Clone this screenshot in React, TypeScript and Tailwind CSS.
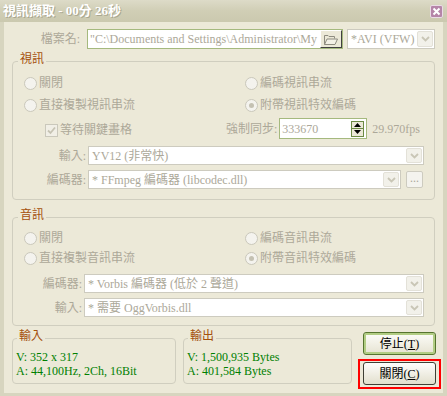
import React from "react";

const FONT = "font-['Liberation_Serif','Noto_Sans_CJK_TC',serif]";

const Radio = ({ checked }: { checked?: boolean }) => (
  <span className="flex h-[13px] w-[13px] shrink-0 items-center justify-center rounded-full border border-[#cac8bb] bg-[#f4f3ee]">
    {checked && <span className="h-[5px] w-[5px] rounded-full bg-[#c4c1b2]" />}
  </span>
);

const RadioItem = ({ label, checked }: { label: string; checked?: boolean }) => (
  <div className="flex items-center gap-[2px]">
    <Radio checked={checked} />
    <span>{label}</span>
  </div>
);

const Chevron = () => (
  <svg width="9" height="6" viewBox="0 0 9 6">
    <path d="M1 1 L4.5 4.5 L8 1" fill="none" stroke="#c9c6b6" strokeWidth="1.8" />
  </svg>
);

const Combo = ({ text, className }: { text: string; className: string }) => (
  <div className={`flex items-stretch border border-[#cdcbbf] bg-white ${className}`}>
    <span className="flex flex-1 items-center overflow-hidden whitespace-nowrap pl-[3px]">{text}</span>
    <span className="m-[1px] flex w-[16px] items-center justify-center rounded-[2px] border border-[#e3e1d8] bg-[#f2f1ea]">
      <Chevron />
    </span>
  </div>
);

const FolderIcon = () => (
  <svg width="16" height="13" viewBox="0 0 16 13">
    <path d="M1.5 11.5 V2.5 H5 L6 3.5 H11.5 V5.5" fill="none" stroke="#8e8c80" strokeWidth="1" />
    <path d="M1.5 11.5 L4 6 H14.5 L12 11.5 Z" fill="#f3f1e6" stroke="#8e8c80" strokeWidth="1" />
  </svg>
);

const Group = ({
  title,
  className,
  legendClass,
  children,
}: {
  title: string;
  className: string;
  legendClass: string;
  children: React.ReactNode;
}) => (
  <fieldset className={`rounded-[4px] border border-[#d0cebf] ${className}`}>
    <legend className={`px-[2px] pb-[4px] text-[#a5500c] ${legendClass}`}>{title}</legend>
    {children}
  </fieldset>
);

export default function App() {
  return (
    <div className={`${FONT} flex h-[396px] w-[447px] flex-col bg-[#d7d5bf] text-[12px] leading-[14px] text-[#aca899]`}>
      {/* title bar */}
      <div className="flex h-[22px] shrink-0 items-center justify-between bg-gradient-to-b from-[#dddbc8] via-[#d0ceb5] to-[#cbc9af] pl-[3px] pr-[4px]">
        <span className="text-[13px] font-bold text-white [text-shadow:1px_1px_0_#a9a790]">視訊擷取 - 00分 26秒</span>
        <span className="flex h-[13px] w-[13px] items-center justify-center rounded-[2px] border border-[#eadbe6] bg-[#b585a8]">
          <svg width="9" height="9" viewBox="0 0 9 9">
            <path d="M1.5 1.5 L7.5 7.5 M7.5 1.5 L1.5 7.5" stroke="white" strokeWidth="2" />
          </svg>
        </span>
      </div>

      {/* body */}
      <div className="mx-[4px] mb-[3px] flex flex-1 flex-col bg-[#ece9d8]">
        {/* file row */}
        <div className="mt-[7px] flex h-[20px] items-center">
          <span className="w-[83px] pr-[7px] text-right">檔案名:</span>
          <div className="flex h-[20px] w-[256px] items-stretch border border-[#a5b97e] bg-white">
            <span className="flex flex-1 items-center overflow-hidden whitespace-nowrap pl-[2px]">
              "C:\Documents and Settings\Administrator\My Documents\capture.avi"
            </span>
            <span className="flex w-[22px] items-center justify-center border-b border-r border-[#404040] border-l border-t border-l-white border-t-white bg-[#ece9d8]">
              <FolderIcon />
            </span>
          </div>
          <Combo text="*AVI (VFW)" className="ml-[4px] h-[20px] w-[88px]" />
        </div>

        {/* video */}
        <Group title="視訊" className="ml-[8px] mt-[3px] w-[423px] pb-[10px]" legendClass="ml-[5px]">
          <div className="mt-[2px] flex h-[22px] items-center pl-[11px]">
            <div className="w-[221px]">
              <RadioItem label="關閉" />
            </div>
            <RadioItem label="編碼視訊串流" />
          </div>
          <div className="flex h-[22px] items-center pl-[11px]">
            <div className="w-[221px]">
              <RadioItem label="直接複製視訊串流" />
            </div>
            <RadioItem label="附帶視訊特效編碼" checked />
          </div>
          <div className="mt-[2px] flex h-[21px] items-center">
            <div className="flex w-[213px] items-center gap-[2px] pl-[32px] pt-[3px]">
              <span className="flex h-[13px] w-[13px] items-center justify-center border border-[#cac8bb] bg-[#f1efe6]">
                <svg width="9" height="9" viewBox="0 0 9 9">
                  <path d="M1 4.5 L3.5 7 L8 1.5" fill="none" stroke="#c6c3b3" strokeWidth="1.8" />
                </svg>
              </span>
              <span>等待關鍵畫格</span>
            </div>
            <span>強制同步:</span>
            <div className="ml-[2px] flex h-[21px] w-[88px] items-center border border-[#a5b97e] bg-white pl-[2px] pr-[2px]">
              <span className="flex-1">333670</span>
              <span className="flex flex-col">
                <span className="flex h-[8px] w-[13px] items-center justify-center border border-[#6d8b45] bg-[#ece9d8]">
                  <svg width="7" height="4" viewBox="0 0 7 4"><path d="M0 4 L3.5 0 L7 4 Z" fill="#000" /></svg>
                </span>
                <span className="flex h-[8px] w-[13px] items-center justify-center border border-t-0 border-[#6d8b45] bg-[#ece9d8]">
                  <svg width="7" height="4" viewBox="0 0 7 4"><path d="M0 0 L3.5 4 L7 0 Z" fill="#000" /></svg>
                </span>
              </span>
            </div>
            <span className="ml-[5px]">29.970fps</span>
          </div>
          <div className="mt-[7px] flex h-[19px] items-center">
            <span className="w-[73px] text-right">輸入:</span>
            <Combo text="YV12 (非常快)" className="ml-[2px] h-[19px] w-[336px]" />
          </div>
          <div className="mt-[5px] flex h-[19px] items-center">
            <span className="w-[73px] text-right">編碼器:</span>
            <Combo text="* FFmpeg 編碼器 (libcodec.dll)" className="ml-[2px] h-[19px] w-[313px]" />
            <span className="ml-[5px] flex h-[17px] w-[17px] items-center justify-center rounded-[2px] border border-[#cdcbbf] bg-[#f4f3ee] pb-[4px]">...</span>
          </div>
        </Group>

        {/* audio */}
        <Group title="音訊" className="ml-[8px] mt-[8px] w-[423px] pb-[8px]" legendClass="ml-[5px]">
          <div className="mt-[2px] flex h-[20px] items-center pl-[11px]">
            <div className="w-[221px]">
              <RadioItem label="關閉" />
            </div>
            <RadioItem label="編碼音訊串流" />
          </div>
          <div className="flex h-[20px] items-center pl-[11px]">
            <div className="w-[221px]">
              <RadioItem label="直接複製音訊串流" />
            </div>
            <RadioItem label="附帶音訊特效編碼" checked />
          </div>
          <div className="mt-[6px] flex h-[19px] items-center">
            <span className="w-[69px] text-right">編碼器:</span>
            <Combo text="* Vorbis 編碼器 (低於 2 聲道)" className="ml-[2px] h-[19px] w-[340px]" />
          </div>
          <div className="mt-[5px] flex h-[19px] items-center">
            <span className="w-[69px] text-right">輸入:</span>
            <Combo text="* 需要 OggVorbis.dll" className="ml-[2px] h-[19px] w-[340px]" />
          </div>
        </Group>

        {/* bottom */}
        <div className="mt-[3px] flex items-start">
          <Group title="輸入" className="ml-[8px] h-[55px] w-[164px]" legendClass="ml-[4px]">
            <div className="mt-[3px] pl-[3px] text-[#008000]">
              <div>V: 352 x 317</div>
              <div>A: 44,100Hz, 2Ch, 16Bit</div>
            </div>
          </Group>
          <Group title="輸出" className="ml-[7px] h-[55px] w-[169px]" legendClass="ml-[4px]">
            <div className="mt-[3px] pl-[3px] text-[#008000]">
              <div>V: 1,500,935 Bytes</div>
              <div>A: 401,584 Bytes</div>
            </div>
          </Group>
          <div className="ml-[6px] mt-[3px] flex w-[83px] flex-col items-center">
            <button className="flex h-[23px] w-[73px] items-center justify-center rounded-[3px] border border-[#56742f] bg-gradient-to-b from-[#fdfdf9] to-[#e6e3d2] text-black shadow-[inset_0_0_0_2px_#b2cd84]">
              停止(<span className="underline">T</span>)
            </button>
            <div className="mt-[4px] border-2 border-[#ff0000] px-[3px] pb-[2px] pt-[1px]">
              <button className="flex h-[23px] w-[73px] items-center justify-center rounded-[3px] border border-[#3f3f35] bg-gradient-to-b from-[#fefefc] to-[#e2dfcd] text-black">
                關閉(<span className="underline">C</span>)
              </button>
            </div>
          </div>
        </div>
      </div>
    </div>
  );
}
